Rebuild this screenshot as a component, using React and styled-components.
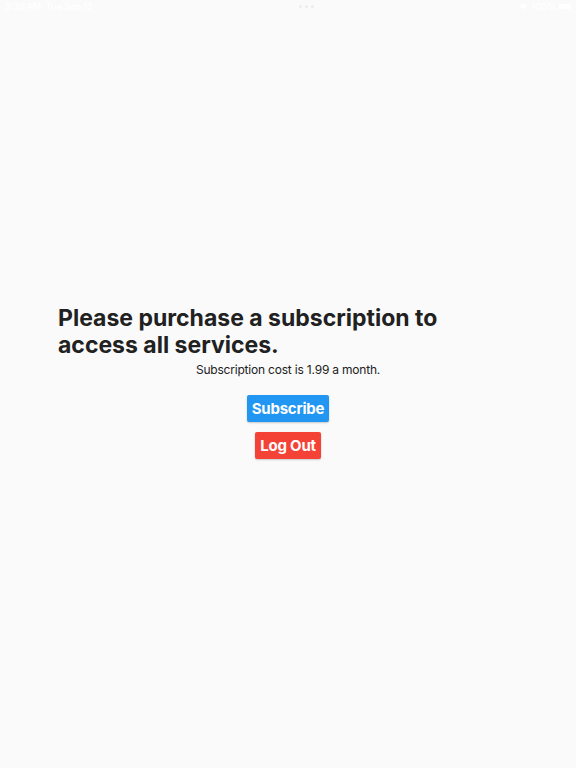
import React from 'react';
import styled, { createGlobalStyle } from 'styled-components';

const GlobalStyle = createGlobalStyle`
  html, body {
    margin: 0;
    padding: 0;
    background: #fafafa;
    font-family: Inter, "Liberation Sans", sans-serif;
  }
`;

const Screen = styled.div`
  position: relative;
  min-height: 100vh;
  background: #fafafa;
  display: flex;
  flex-direction: column;
  align-items: center;
  justify-content: center;
  padding: 0 58px 4px;
  box-sizing: border-box;
`;

const StatusBar = styled.div`
  position: absolute;
  top: 0;
  left: 0;
  right: 0;
  height: 12px;
  display: flex;
  align-items: center;
  justify-content: space-between;
  padding: 0 5px;
  color: #ffffff;
  font-size: 9px;
  font-weight: 600;
`;

const StatusRight = styled.div`
  display: flex;
  align-items: center;
  gap: 3px;
`;

const Dots = styled.div`
  display: flex;
  gap: 3px;
  span {
    width: 3px;
    height: 3px;
    border-radius: 50%;
    background: #ececec;
  }
`;

const Battery = styled.div`
  width: 12px;
  height: 5px;
  background: #ffffff;
  border-radius: 1px;
`;

const Title = styled.h1`
  align-self: stretch;
  margin: 0;
  font-size: 23px;
  line-height: 27px;
  font-weight: 700;
  color: #212121;
`;

const Subtitle = styled.p`
  margin: 3px 0 0;
  font-size: 12px;
  letter-spacing: -0.2px;
  color: #212121;
`;

const Button = styled.button`
  border: none;
  border-radius: 2px;
  padding: 0 5px;
  height: 27px;
  font-family: inherit;
  font-size: 15px;
  letter-spacing: -0.2px;
  font-weight: 700;
  color: #ffffff;
  background: ${p => p.color};
  box-shadow: 0 1px 2px rgba(0, 0, 0, 0.2);
  margin-top: ${p => p.gap}px;
`;

export default function App() {
  return (
    <>
      <GlobalStyle />
      <Screen>
        <StatusBar>
          <span>3:26 PM&nbsp;&nbsp;Tue Sep 12</span>
          <Dots><span /><span /><span /></Dots>
          <StatusRight>
            <svg width="9" height="7" viewBox="0 0 9 7">
              <path d="M0.5 2.5 A5.5 5.5 0 0 1 8.5 2.5 L4.5 6.5 Z" fill="#fff" />
            </svg>
            <span>100%</span>
            <Battery />
          </StatusRight>
        </StatusBar>
        <Title>Please purchase a subscription to access all services.</Title>
        <Subtitle>Subscription cost is 1.99 a month.</Subtitle>
        <Button color="#2196f3" gap={18}>Subscribe</Button>
        <Button color="#f44336" gap={10}>Log Out</Button>
      </Screen>
    </>
  );
}
